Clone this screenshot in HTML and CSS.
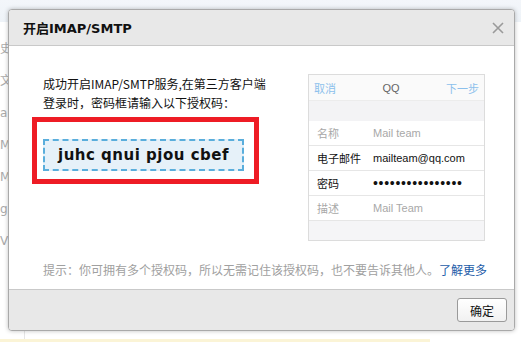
FILE: index.html
```html
<!DOCTYPE html>
<html lang="zh-CN">
<head>
<meta charset="utf-8">
<title>开启IMAP/SMTP</title>
<link rel="stylesheet" href="styles.css">
</head>
<body>
<div class="page">
  <div class="page-top"></div>
  <div class="page-side">
    <span>史</span><span>文</span><span>a</span><span>M</span><span>M</span><span>g</span><span>V</span>
  </div>
  <div class="page-bottom"></div>
</div>

<div class="dialog">
  <div class="dlg-head">
    <span class="dlg-title">开启IMAP/SMTP</span>
    <svg class="dlg-close" width="12" height="12" viewBox="0 0 12 12"><path d="M1 1L11 11M11 1L1 11" stroke="#9a9a9a" stroke-width="1.6" fill="none"/></svg>
  </div>
  <div class="dlg-body">
    <div class="dlg-main">
      <div class="dlg-left">
        <p class="intro">成功开启IMAP/SMTP服务,在第三方客户端<br>登录时，密码框请输入以下授权码：</p>
        <div class="mark">
          <div class="code">juhc qnui pjou cbef</div>
        </div>
      </div>
      <div class="phone">
        <div class="ph-bar">
          <span class="ph-link">取消</span>
          <span class="ph-title">QQ</span>
          <span class="ph-link">下一步</span>
        </div>
        <div class="ph-gap"></div>
        <div class="ph-row muted"><span class="ph-label">名称</span><span class="ph-val">Mail team</span></div>
        <div class="ph-row"><span class="ph-label">电子邮件</span><span class="ph-val">mailteam@qq.com</span></div>
        <div class="ph-row"><span class="ph-label">密码</span><span class="ph-val dots">••••••••••••••••</span></div>
        <div class="ph-row muted"><span class="ph-label">描述</span><span class="ph-val">Mail Team</span></div>
        <div class="ph-foot"></div>
      </div>
    </div>
    <p class="hint">提示：你可拥有多个授权码，所以无需记住该授权码，也不要告诉其他人。<a class="more" href="#">了解更多</a></p>
  </div>
  <div class="dlg-foot">
    <button class="btn" type="button">确定</button>
  </div>
</div>
</body>
</html>
```
FILE: styles.css
```css
html, body {
  margin: 0;
  padding: 0;
}
body {
  width: 521px;
  height: 342px;
  overflow: hidden;
  background: #ffffff;
  font-family: "Noto Sans CJK SC", "DejaVu Sans", sans-serif;
  position: relative;
}
.page {
  width: 521px;
  height: 342px;
  display: flex;
  flex-direction: column;
}
.page-top {
  height: 22px;
  background: linear-gradient(#f3f6fa, #eef3f8);
}
.page-side {
  flex: 1;
  width: 24px;
  display: flex;
  flex-direction: column;
  gap: 18px;
  padding-top: 20px;
  font-family: "DejaVu Sans", sans-serif;
  font-size: 12px;
  color: #aaa;
  border-right: 1px solid #e6e6e6;
}
.page-side span {
  display: block;
  line-height: 14px;
}
.page-bottom {
  height: 3px;
  width: 430px;
  background: #fbf4d6;
}
.dialog {
  position: absolute;
  left: 8px;
  top: 9px;
  width: 505px;
  height: 320px;
  border: 1px solid #a9a9a9;
  border-radius: 4px;
  background: #fff;
  box-shadow: 0 0 4px rgba(0, 0, 0, 0.25);
  display: flex;
  flex-direction: column;
  overflow: hidden;
}
.dlg-head {
  height: 35px;
  flex: none;
  background: #e8e8e8;
  border-bottom: 1px solid #c9c9c9;
  display: flex;
  align-items: center;
  justify-content: space-between;
  padding: 0 10px 0 14px;
}
.dlg-title {
  font-family: "DejaVu Sans", "Noto Sans CJK SC", sans-serif;
  font-weight: bold;
  font-size: 13px;
  color: #111;
}
.dlg-close {
  display: block;
}
.dlg-body {
  flex: 1;
  padding: 28px 29px 0 34px;
  display: flex;
  flex-direction: column;
}
.dlg-main {
  display: flex;
  justify-content: space-between;
  align-items: flex-start;
}
.dlg-left {
  width: 240px;
}
.intro {
  margin: 0;
  font-size: 12px;
  line-height: 19px;
  color: #111;
  white-space: nowrap;
}
.mark {
  margin: 5px 0 0 -11px;
  width: 201px;
  border: 5px solid #ee1c25;
  padding: 17px 10px 8px 6px;
}
.code {
  height: 28px;
  width: 197px;
  border: 2px dashed #5aaedc;
  background: #e6f1f9;
  display: flex;
  align-items: center;
  justify-content: center;
  font-family: "DejaVu Sans", sans-serif;
  font-weight: bold;
  font-size: 15px;
  letter-spacing: 0.5px;
  color: #111;
}
.phone {
  width: 175px;
  border: 1px solid #dcdcdc;
  background: #fff;
  font-family: "Liberation Sans", "Noto Sans CJK SC", sans-serif;
  font-size: 11px;
}
.ph-bar {
  height: 25px;
  background: #fafafa;
  display: flex;
  align-items: center;
  justify-content: space-between;
  padding: 0 5px 0 5px;
}
.ph-link {
  color: #8cc0ec;
}
.ph-title {
  color: #666;
}
.ph-gap {
  height: 20px;
  background: #f3f3f5;
  border-top: 1px solid #ececec;
}
.ph-row {
  height: 24px;
  display: flex;
  align-items: center;
  border-bottom: 1px solid #e6e6e6;
  padding-left: 8px;
  color: #111;
}
.ph-label {
  width: 56px;
  flex: none;
}
.muted .ph-label,
.muted .ph-val {
  color: #a8a8a8;
}
.dots {
  font-size: 14px;
  letter-spacing: 0.7px;
}
.ph-foot {
  height: 19px;
  background: #f5f5f7;
}
.hint {
  margin: 19px 0 0 0;
  font-size: 12px;
  line-height: 19px;
  color: #a0a0a0;
  white-space: nowrap;
}
.more {
  color: #1d5ca8;
  text-decoration: none;
}
.dlg-foot {
  height: 40px;
  flex: none;
  background: #e8e8e8;
  border-top: 1px solid #c9c9c9;
  display: flex;
  align-items: center;
  justify-content: flex-end;
  padding-right: 7px;
}
.btn {
  width: 50px;
  height: 24px;
  border: 1px solid #9a9a9a;
  border-radius: 3px;
  background: linear-gradient(#ffffff, #f1f1f1);
  font-family: "Noto Sans CJK SC", sans-serif;
  font-size: 12px;
  color: #111;
  padding: 0;
}
```
